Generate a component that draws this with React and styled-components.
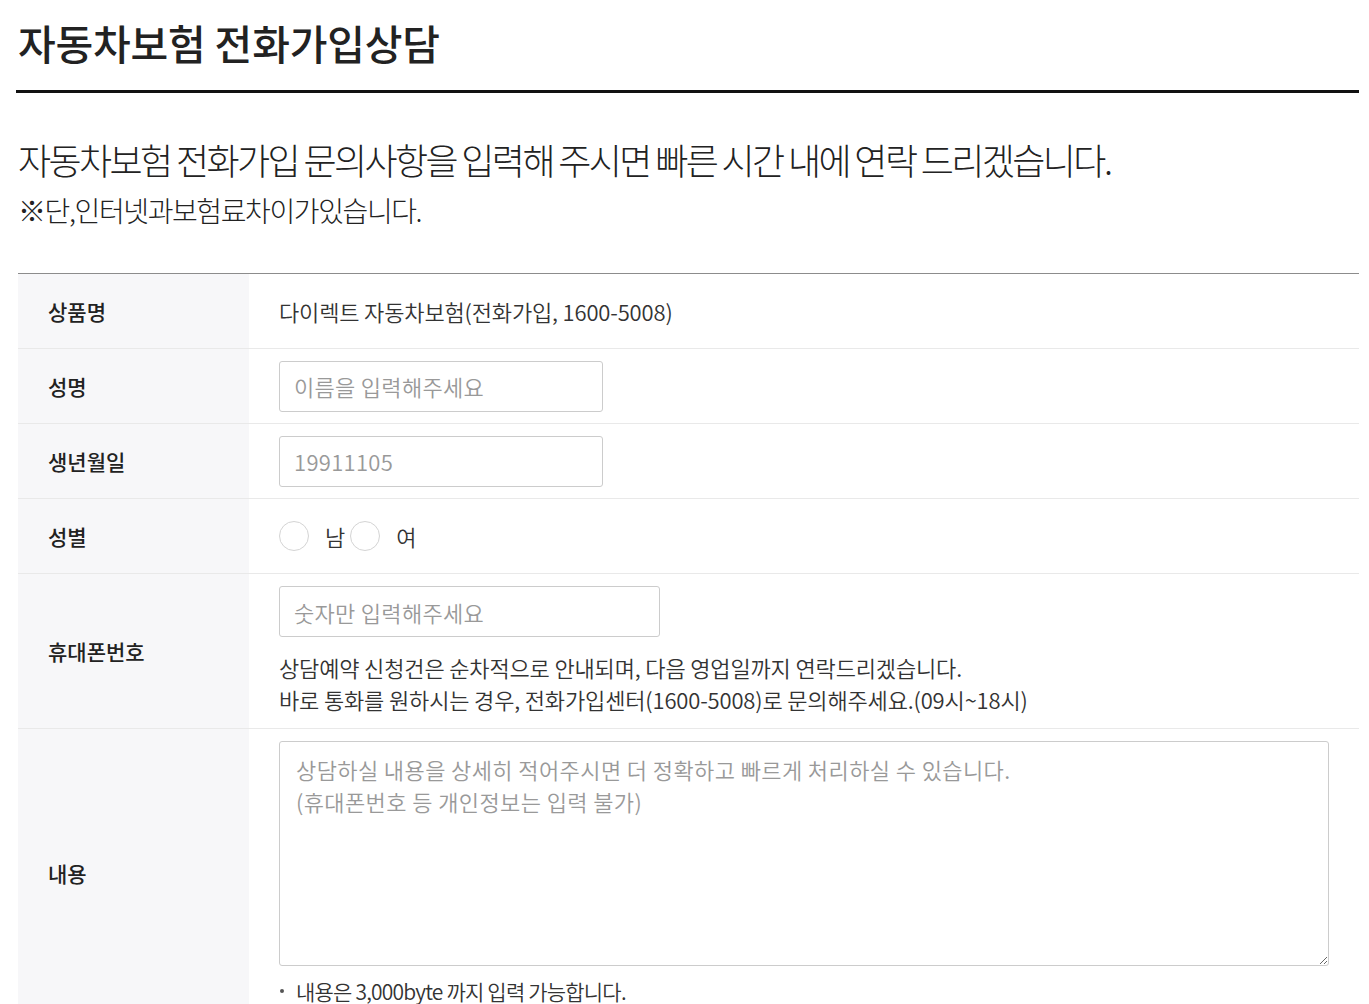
import React from "react";
import styled, { createGlobalStyle } from "styled-components";

const Global = createGlobalStyle`
  html, body { margin: 0; padding: 0; background: #fff; }
  body { font-family: "Noto Sans CJK KR", "Noto Sans", sans-serif; color: #222; }
  * { box-sizing: border-box; }
`;

const Page = styled.div`
  padding: 0 10px 0 18px;
`;

const Title = styled.h1`
  margin: 0 0 0 -2px;
  padding: 12px 0 18px 2px;
  font-size: 41px;
  font-weight: 450;
  letter-spacing: -0.2px;
  line-height: 60px;
  color: #222;
  border-bottom: 3px solid #111;
`;

const Intro = styled.div`
  padding: 41px 0 43px;
`;

const Lead = styled.p`
  margin: 0;
  font-size: 36px;
  font-weight: 300;
  letter-spacing: -2.6px;
  line-height: 50px;
  color: #222;
`;

const Note = styled.p`
  margin: 6px 0 0;
  font-size: 28px;
  font-weight: 300;
  letter-spacing: -1.4px;
  line-height: 40px;
  color: #222;
`;

const Table = styled.div`
  border-top: 1px solid #8c8c8c;
  display: grid;
  grid-template-columns: 231px 1fr;
`;

const Label = styled.div`
  background: #f7f7f9;
  padding: 0 30px;
  display: flex;
  align-items: center;
  font-size: 21px;
  font-weight: 500;
  color: #222;
  border-bottom: 1px solid #e9e9e9;
  min-height: ${(p) => p.h || 75}px;
`;

const Cell = styled.div`
  padding: ${(p) => p.pad || "0 30px"};
  display: flex;
  flex-direction: column;
  justify-content: center;
  font-size: 22px;
  font-weight: 350;
  color: #333;
  border-bottom: 1px solid #e9e9e9;
  min-height: ${(p) => p.h || 75}px;
`;

const Text = styled.span`
  font-size: 22px;
  color: #333;
  letter-spacing: -0.15px;
`;

const Input = styled.input`
  width: ${(p) => p.w || 324}px;
  height: 51px;
  border: 1px solid #ccc;
  border-radius: 3px;
  padding: 0 14px;
  font-family: inherit;
  font-size: 22px;
  font-weight: 350;
  letter-spacing: 0.3px;
  color: #333;
  outline: none;
  &::placeholder { color: #999; }
`;

const RadioGroup = styled.div`
  display: flex;
  align-items: center;
  gap: 5px;
`;

const RadioLabel = styled.label`
  display: flex;
  align-items: center;
  font-size: 22px;
  color: #333;
`;

const Circle = styled.span`
  width: 30px;
  height: 30px;
  border-radius: 50%;
  border: 1px solid #d4d4d4;
  background: #fff;
  margin-right: 16px;
`;

const Help = styled.p`
  margin: 14px 0 0;
  font-size: 22px;
  line-height: 32px;
  color: #333;
  letter-spacing: -0.15px;
`;

const TextArea = styled.textarea`
  width: 1050px;
  height: 225px;
  border: 1px solid #ccc;
  border-radius: 3px;
  padding: 11px 16px;
  font-family: inherit;
  font-size: 22px;
  font-weight: 350;
  line-height: 32px;
  letter-spacing: 0.4px;
  color: #333;
  outline: none;
  display: block;
  &::placeholder { color: #999; }
`;

const Small = styled.p`
  margin: 12px 0 0;
  display: flex;
  align-items: center;
  font-size: 21px;
  color: #333;
  letter-spacing: -0.8px;
  line-height: 26px;
`;

const Dot = styled.span`
  width: 4px;
  height: 4px;
  border-radius: 50%;
  background: #555;
  margin: 0 12px 0 1px;
`;

export default function App() {
  return (
    <Page>
      <Global />
      <Title>자동차보험 전화가입상담</Title>
      <Intro>
        <Lead>자동차보험 전화가입 문의사항을 입력해 주시면 빠른 시간 내에 연락 드리겠습니다.</Lead>
        <Note>※단,인터넷과보험료차이가있습니다.</Note>
      </Intro>
      <Table>
        <Label>상품명</Label>
        <Cell>
          <Text>다이렉트 자동차보험(전화가입, 1600-5008)</Text>
        </Cell>
        <Label>성명</Label>
        <Cell>
          <Input placeholder="이름을 입력해주세요" />
        </Cell>
        <Label>생년월일</Label>
        <Cell>
          <Input placeholder="19911105" />
        </Cell>
        <Label>성별</Label>
        <Cell>
          <RadioGroup>
            <RadioLabel>
              <Circle />남
            </RadioLabel>
            <RadioLabel>
              <Circle />여
            </RadioLabel>
          </RadioGroup>
        </Cell>
        <Label h={153}>휴대폰번호</Label>
        <Cell h={153} pad="12px 30px 13px">
          <Input w={381} placeholder="숫자만 입력해주세요" />
          <Help>
            상담예약 신청건은 순차적으로 안내되며, 다음 영업일까지 연락드리겠습니다.
            <br />
            바로 통화를 원하시는 경우, 전화가입센터(1600-5008)로 문의해주세요.(09시~18시)
          </Help>
        </Cell>
        <Label h={280}>내용</Label>
        <Cell h={280} pad="12px 30px">
          <TextArea placeholder={"상담하실 내용을 상세히 적어주시면 더 정확하고 빠르게 처리하실 수 있습니다.\n(휴대폰번호 등 개인정보는 입력 불가)"} />
          <Small>
            <Dot />내용은 3,000byte 까지 입력 가능합니다.
          </Small>
        </Cell>
      </Table>
    </Page>
  );
}
